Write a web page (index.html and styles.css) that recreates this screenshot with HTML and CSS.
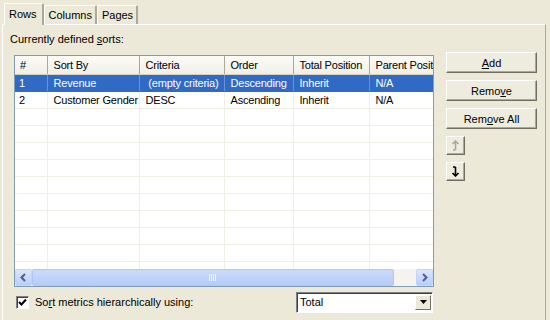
FILE: index.html
```html
<!DOCTYPE html>
<html lang="en">
<head>
  <meta charset="UTF-8" />
  <title>Sort options</title>
  <link rel="stylesheet" href="styles.css">
</head>
<body>
  <div class="tabs">
    <div class="tab active">Rows</div>
    <div class="tab">Columns</div>
    <div class="tab">Pages</div>
  </div>

  <div class="panel">
    <div class="main">
      <div class="label">Currently defined <u>s</u>orts:</div>
      <div class="list">
        <div class="grid">
          <table>
            <colgroup>
              <col class="c-num"><col class="c-sort"><col class="c-crit"><col class="c-order"><col class="c-total"><col class="c-parent">
            </colgroup>
            <thead>
              <tr><th>#</th><th>Sort By</th><th>Criteria</th><th>Order</th><th>Total Position</th><th>Parent Position</th></tr>
            </thead>
            <tbody>
              <tr class="selected"><td>1</td><td>Revenue</td><td>&nbsp;(empty criteria)</td><td>Descending</td><td>Inherit</td><td>N/A</td></tr>
              <tr><td>2</td><td>Customer Gender</td><td>DESC</td><td>Ascending</td><td>Inherit</td><td>N/A</td></tr>
              <tr><td></td><td></td><td></td><td></td><td></td><td></td></tr>
              <tr><td></td><td></td><td></td><td></td><td></td><td></td></tr>
              <tr><td></td><td></td><td></td><td></td><td></td><td></td></tr>
              <tr><td></td><td></td><td></td><td></td><td></td><td></td></tr>
              <tr><td></td><td></td><td></td><td></td><td></td><td></td></tr>
              <tr><td></td><td></td><td></td><td></td><td></td><td></td></tr>
              <tr><td></td><td></td><td></td><td></td><td></td><td></td></tr>
              <tr><td></td><td></td><td></td><td></td><td></td><td></td></tr>
              <tr><td></td><td></td><td></td><td></td><td></td><td></td></tr>
              <tr><td></td><td></td><td></td><td></td><td></td><td></td></tr>
            </tbody>
          </table>
        </div>
        <div class="hscroll">
          <div class="sb-btn">
            <svg width="9" height="9" viewBox="0 0 9 9"><path d="M6 1 L2.5 4.5 L6 8" fill="none" stroke="#4d6185" stroke-width="2"/></svg>
          </div>
          <div class="sb-thumb">
            <svg width="8" height="7" viewBox="0 0 8 7"><path d="M0.5 0v7M2.5 0v7M4.5 0v7M6.5 0v7" stroke="#eef4fe" stroke-width="1"/></svg>
          </div>
          <div class="sb-track"></div>
          <div class="sb-btn">
            <svg width="9" height="9" viewBox="0 0 9 9"><path d="M3 1 L6.5 4.5 L3 8" fill="none" stroke="#4d6185" stroke-width="2"/></svg>
          </div>
        </div>
      </div>
      <div class="bottom">
        <label class="check">
          <span class="box">
            <svg width="9" height="9" viewBox="0 0 9 9"><path d="M1 4 L3.5 6.5 L8 1.5" fill="none" stroke="#000" stroke-width="2"/></svg>
          </span>
          <span>So<u>r</u>t metrics hierarchically using:</span>
        </label>
        <div class="combo">
          <span class="combo-text">Total</span>
          <span class="combo-btn">
            <svg width="7" height="4" viewBox="0 0 7 4"><path d="M0 0h7L3.5 4z" fill="#000"/></svg>
          </span>
        </div>
      </div>
    </div>

    <div class="side">
      <button class="btn"><u>A</u>dd</button>
      <button class="btn">Remo<u>v</u>e</button>
      <button class="btn">Rem<u>o</u>ve All</button>
      <button class="btn small">
        <svg width="9" height="11" viewBox="0 0 9 11"><path d="M4.5 1v9M4.5 10H2M1.5 4L4.5 1 7.5 4" fill="none" stroke="#aca899" stroke-width="1.6"/></svg>
      </button>
      <button class="btn small">
        <svg width="9" height="11" viewBox="0 0 9 11"><path d="M4.5 1v9M4.5 1H2M1.5 7L4.5 10 7.5 7" fill="none" stroke="#000" stroke-width="1.6"/></svg>
      </button>
    </div>
  </div>
</body>
</html>
```

FILE: styles.css
```css
body {
  margin: 0;
  width: 550px;
  height: 320px;
  overflow: hidden;
  background: #ece9d8;
  font-family: "Liberation Sans", Arial, sans-serif;
  font-size: 11px;
  color: #000;
}

/* tab strip */
.tabs {
  display: flex;
  align-items: flex-end;
  height: 24px;
  padding-left: 4px;
}
.tab {
  height: 18px;
  line-height: 18px;
  padding: 0 3px 0 4px;
  border-top: 1px solid #fff;
  border-left: 1px solid #fff;
  border-right: 2px solid #aca899;
  border-radius: 2px 2px 0 0;
}
.tab.active {
  height: 21px;
  line-height: 20px;
  margin-bottom: -1px;
  padding: 0 5px 0 4px;
  background: #ece9d8;
  position: relative;
  z-index: 1;
}

.panel {
  display: flex;
  margin: 0 4px 0 2px;
  height: 300px;
  border-top: 1px solid #fff;
  border-left: 1px solid #fff;
  border-right: 1px solid #aca899;
  padding: 7px 0 0 7px;
}

.main { width: 436px; }
.label { line-height: 14px; height: 14px; }

/* list view */
.list {
  margin: 9px 0 0 4px;
  width: 418px;
  height: 230px;
  border: 1px solid #7f9db9;
  background: #fff;
  display: flex;
  flex-direction: column;
}
.grid {
  flex: 1;
  overflow: hidden;
}
table {
  border-collapse: collapse;
  table-layout: fixed;
  width: 480px;
  letter-spacing: -0.2px;
}
.c-num { width: 32px; }
.c-sort { width: 92px; }
.c-crit { width: 85px; }
.c-order { width: 69px; }
.c-total { width: 76px; }
.c-parent { width: 126px; }

th {
  height: 18px;
  padding: 0 2px 0 6px;
  text-align: left;
  font-weight: normal;
  white-space: nowrap;
  overflow: hidden;
  background: linear-gradient(#fbfbf8, #f0efe6);
  border-bottom: 1px solid #d5d2c2;
  border-right: 1px solid #aca899;
  box-sizing: border-box;
}
th:first-child { padding-left: 5px; }
td {
  height: 16px;
  padding: 0 1px 0 6px;
  white-space: nowrap;
  overflow: hidden;
  border-bottom: 1px solid #f1efe2;
  border-right: 1px solid #f1efe2;
}
td:first-child { padding-left: 4px; }
tr.selected td {
  background: #316ac5;
  color: #fff;
  border-right-color: #6a93d4;
  border-bottom-color: #316ac5;
}

/* scrollbar */
.hscroll {
  display: flex;
  height: 17px;
  background: #f4f3ee;
}
.sb-btn {
  width: 17px;
  height: 17px;
  box-sizing: border-box;
  border: 1px solid #c3d3fd;
  border-radius: 2px;
  background: linear-gradient(#dae6fe, #b9cefa);
  display: flex;
  align-items: center;
  justify-content: center;
}
.sb-thumb {
  width: 362px;
  box-sizing: border-box;
  border: 1px solid #b1c6f4;
  border-radius: 2px;
  background: linear-gradient(#cbdaf9, #b7cbf7);
  display: flex;
  align-items: center;
  justify-content: center;
}
.sb-track { flex: 1; }

/* bottom row */
.bottom {
  display: flex;
  align-items: center;
  justify-content: space-between;
  margin: 4px 0 0 4px;
  width: 419px;
  height: 22px;
}
.check {
  display: flex;
  align-items: center;
  gap: 6px;
  padding-left: 2px;
}
.box {
  width: 11px;
  height: 11px;
  border-top: 1px solid #808080;
  border-left: 1px solid #808080;
  border-right: 1px solid #fff;
  border-bottom: 1px solid #fff;
  box-shadow: inset 1px 1px 0 #404040;
  background: #fff;
  display: flex;
  align-items: center;
  justify-content: center;
}
.combo {
  display: flex;
  width: 137px;
  height: 21px;
  box-sizing: border-box;
  border-top: 1px solid #808080;
  border-left: 1px solid #808080;
  border-right: 1px solid #fff;
  border-bottom: 1px solid #fff;
  box-shadow: inset 1px 1px 0 #404040;
  background: #fff;
}
.combo-text {
  flex: 1;
  padding: 3px 0 0 3px;
}
.combo-btn {
  width: 16px;
  margin: 2px 1px 2px 0;
  box-sizing: border-box;
  background: #ece9d8;
  border-top: 1px solid #fff;
  border-left: 1px solid #fff;
  border-right: 1px solid #716f64;
  border-bottom: 1px solid #716f64;
  display: flex;
  align-items: center;
  justify-content: center;
}

/* side buttons */
.side {
  display: flex;
  flex-direction: column;
  align-items: flex-start;
  margin: 20px 0 0 0;
}
.btn {
  width: 91px;
  height: 21px;
  margin-bottom: 7px;
  padding: 0;
  font-family: inherit;
  font-size: 11px;
  color: #000;
  background: #eeebdf;
  border-top: 1px solid #fff;
  border-left: 1px solid #fff;
  border-right: 1px solid #716f64;
  border-bottom: 1px solid #716f64;
  box-shadow: inset -1px -1px 0 #aca899;
}
.btn.small {
  width: 19px;
  height: 19px;
  display: flex;
  align-items: center;
  justify-content: center;
}
```
